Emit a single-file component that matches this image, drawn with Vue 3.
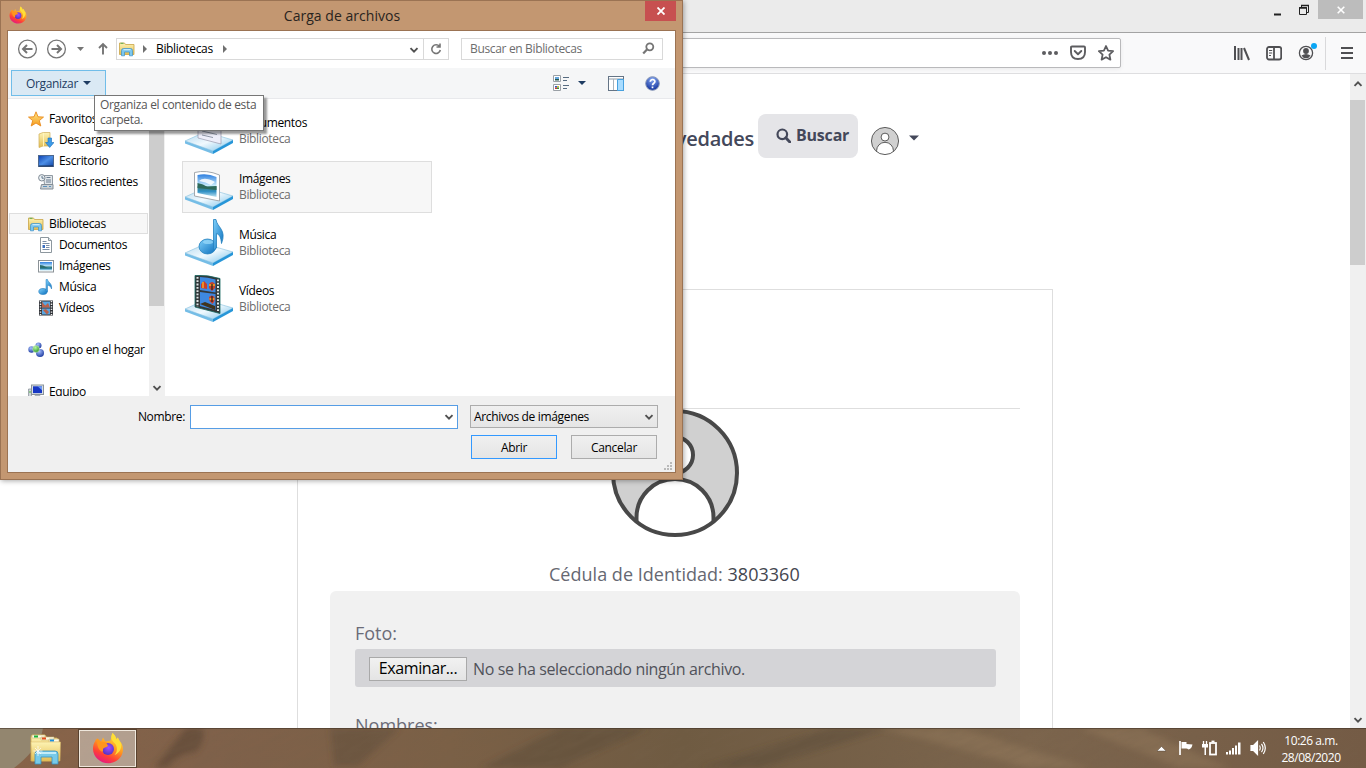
<script setup>
const tree = [
  { label: 'Favoritos', icon: 'star', level: 0 },
  { label: 'Descargas', icon: 'downloads', level: 1 },
  { label: 'Escritorio', icon: 'desktop', level: 1 },
  { label: 'Sitios recientes', icon: 'recent', level: 1 },
  { spacer: true },
  { label: 'Bibliotecas', icon: 'library', level: 0, selected: true },
  { label: 'Documentos', icon: 'document', level: 1 },
  { label: 'Imágenes', icon: 'picture', level: 1 },
  { label: 'Música', icon: 'music', level: 1 },
  { label: 'Vídeos', icon: 'video', level: 1 },
  { spacer: true },
  { label: 'Grupo en el hogar', icon: 'homegroup', level: 0 },
  { spacer: true },
  { label: 'Equipo', icon: 'computer', level: 0 }
]
const libraries = [
  { name: 'Documentos', icon: 'big-doc' },
  { name: 'Imágenes', icon: 'big-picture', hover: true },
  { name: 'Música', icon: 'big-music' },
  { name: 'Vídeos', icon: 'big-video' }
]
</script>

<template>
  <div class="screen">
    <svg class="defs" width="0" height="0" aria-hidden="true">
      <defs>
        <linearGradient id="gFolder" x1="0" y1="0" x2="0" y2="1"><stop offset="0" stop-color="#fdf3b4" /><stop offset="1" stop-color="#e3bd52" /></linearGradient>
        <linearGradient id="gBlue" x1="0" y1="0" x2="1" y2="1"><stop offset="0" stop-color="#0b3fb0" /><stop offset=".5" stop-color="#4d8fe6" /><stop offset="1" stop-color="#1246a6" /></linearGradient>
        <linearGradient id="gNote" x1="0" y1="0" x2="1" y2="1"><stop offset="0" stop-color="#7fd0fa" /><stop offset="1" stop-color="#0b6fbd" /></linearGradient>
        <linearGradient id="gPlate" x1="0" y1="0" x2="1" y2="1"><stop offset="0" stop-color="#b4d9ef" /><stop offset=".5" stop-color="#f0f9fe" /><stop offset="1" stop-color="#79c2ea" /></linearGradient>
        <linearGradient id="gSky" x1="0" y1="0" x2="0" y2="1"><stop offset="0" stop-color="#2d7fe0" /><stop offset=".5" stop-color="#c9ecfb" /><stop offset=".55" stop-color="#3d7f7a" /><stop offset=".75" stop-color="#2f8fc4" /><stop offset="1" stop-color="#bfe4f2" /></linearGradient>
        <linearGradient id="gStar" x1="0" y1="0" x2="0" y2="1"><stop offset="0" stop-color="#ffe98a" /><stop offset="1" stop-color="#f59a1b" /></linearGradient>
        <linearGradient id="gFox" x1=".8" y1="0" x2=".3" y2="1"><stop offset="0" stop-color="#fff04a" /><stop offset=".45" stop-color="#ff9a1f" /><stop offset=".75" stop-color="#ff4036" /><stop offset="1" stop-color="#e31587" /></linearGradient>
        <radialGradient id="gGlobe" cx=".55" cy=".4" r=".7"><stop offset="0" stop-color="#a44dff" /><stop offset="1" stop-color="#4630b8" /></radialGradient>
        <radialGradient id="gHelp" cx=".5" cy=".2" r=".8"><stop offset="0" stop-color="#87a9f2" /><stop offset="1" stop-color="#10309c" /></radialGradient>
        <radialGradient id="gBall" cx=".4" cy=".3" r=".8"><stop offset="0" stop-color="#a5c0ff" /><stop offset="1" stop-color="#122f96" /></radialGradient>
        <radialGradient id="gGreen" cx=".4" cy=".3" r=".8"><stop offset="0" stop-color="#b8f7a0" /><stop offset="1" stop-color="#168a1a" /></radialGradient>
      </defs>

      <symbol id="firefox" viewBox="0 0 32 32">
        <path d="M5.500 6.500 9 9.800l2-4.300 2.400 4.100c2-.9 3.600-1 5-.8L20.500 1c1.900 1.700 3.300 3.700 4 6.200l1.400-1.700c.5 2.200 2.300 3.700 3.800 6.200 1.600 3 1.800 7.300.3 10.800C27.700 27.800 22.500 31.200 16.500 31.200 8.200 31.200 1 25 1 16.700c0-3.200.9-5.500 2.200-7.500.3-1.200 1-2.100 2.300-2.700z" fill="url(#gFox)" />
        <circle cx="16" cy="17" r="6" fill="url(#gGlobe)" />
        <path d="M5.500 6.500 9 10l5 .5 2 3.200c-1 1.700-3.500 1.500-4.400 2.500-1.300 1.300.2 3-1.300 3.600C7.500 19 4 14 5.500 6.500z" fill="#ff951d" />
        <path d="M20.500 1c-2.500 4.500-.8 7.500 2.200 10.200 3 3 3 9-.2 11.800 5-2 7.500-6.500 6.500-11.500-1.500-2.500-2.600-4-3.100-6l-1.400 1.700C23.800 4.700 22.400 2.700 20.500 1z" fill="#ffdf38" />
      </symbol>

      <symbol id="library" viewBox="0 0 16 16">
        <path d="M.5 2h5l1 1.500H15v10H.5z" fill="url(#gFolder)" stroke="#c9a548" stroke-width=".8" />
        <path d="M1.500 2.300h3" stroke="#59a94b" />
        <path d="M2.500 14.800V9.500q0-2 2-2h7q2 0 2 2v5.300h-3V11h-5v3.800z" fill="#7cc7ee" stroke="#3c91c9" stroke-width=".7" />
        <path d="M4.500 8.700h7" stroke="#d9f3ff" />
      </symbol>
      <symbol id="star" viewBox="0 0 16 16"><path d="M8 .8l2 5 5.500.3-4.200 3.500 1.500 5.400L8 12l-4.800 3 1.500-5.400L.5 6.100 6 5.800z" fill="url(#gStar)" stroke="#e98a1c" stroke-width=".9" /></symbol>
      <symbol id="downloads" viewBox="0 0 16 16">
        <path d="M1 2l4-1.500h7V14H5l-4 1.500z" fill="url(#gFolder)" stroke="#cfae57" stroke-width=".7" /><path d="M5.500.8v14" stroke="#fff4bd" />
        <path d="M10 6h3.500v4.500H16L11.700 15.500 7.500 10.500H10z" fill="#3d9be8" stroke="#1a6ebc" stroke-width=".6" />
      </symbol>
      <symbol id="desktop" viewBox="0 0 16 16"><rect x=".5" y="2.500" width="15" height="11" fill="url(#gBlue)" stroke="#4c678e" /><path d="M1 13h14" stroke="#193156" /></symbol>
      <symbol id="recent" viewBox="0 0 16 16">
        <path d="M5.500 1.500h9v9h-8z" fill="#e1e6ea" stroke="#909aa3" /><path d="M8.500 3.500h4M8 6h5M8 8h5" stroke="#6a7d90" />
        <path d="M3.500 10.500h11.500v4.500H2.500z" fill="#cbd2d7" stroke="#848e97" /><path d="M5 12.500h4M11 12.500h2" stroke="#5b92bd" />
        <circle cx="3.800" cy="3.800" r="3.200" fill="#edf2f5" stroke="#7f8a94" /><path d="M4 2v2.200h1.800" stroke="#3c5972" fill="none" stroke-width=".8" />
      </symbol>
      <symbol id="document" viewBox="0 0 16 16">
        <path d="M2.500.5h8l3 3v12h-11z" fill="#fff" stroke="#8d979e" /><path d="M10.500.5v3h3" fill="#dbe3e8" stroke="#8d979e" />
        <path d="M4.500 4.500h4M4.500 6.500h7M8 8.500h3.500M8 10.500h3.500M4.500 12.500h7" stroke="#7a8ea8" /><path d="M4.500 8h2.500v3H4.500z" fill="#3a6fc1" />
      </symbol>
      <symbol id="picture" viewBox="0 0 16 16"><rect x=".5" y="2.500" width="15" height="11.500" fill="#fff" stroke="#8b9297" /><path d="M2 4h12v8.500H2z" fill="url(#gSky)" /><path d="M2 7q3 0 6 2t6 0v1.500H2z" fill="#2c6e6e" /></symbol>
      <symbol id="music" viewBox="0 0 16 16"><ellipse cx="5" cy="12.500" rx="4.200" ry="3" fill="url(#gNote)" stroke="#1d78bd" stroke-width=".6" /><path d="M8 12.500V.5h1.500c.5 3 5 3.500 4 9.500-.5-2-1.500-3.300-4-4v6.500z" fill="url(#gNote)" stroke="#1d78bd" stroke-width=".5" /></symbol>
      <symbol id="video" viewBox="0 0 16 16">
        <rect x="1" y=".5" width="14" height="15" fill="#303338" /><path d="M2.500 1v14M13.500 1v14" stroke="#eee" stroke-width="1.500" stroke-dasharray="1.300 1.300" />
        <path d="M4 1.500h8v6H4zM4 8.500h8v6H4z" fill="#5aa5df" /><path d="M4 1.500l2 3 1.500 1L10 3l2 4.500H4zM5 10l3-1 3 3-2 2.500z" fill="#b9614b" />
      </symbol>
      <symbol id="homegroup" viewBox="0 0 16 16"><circle cx="3.500" cy="7.500" r="3.200" fill="url(#gBall)" /><circle cx="10.500" cy="3.500" r="3" fill="url(#gBall)" /><circle cx="12" cy="11" r="4" fill="url(#gBall)" /><circle cx="8" cy="7" r="3.400" fill="url(#gGreen)" stroke="#e6f7e2" stroke-width=".5" /></symbol>
      <symbol id="computer" viewBox="0 0 16 16"><path d="M.5 5h3v9h-3z" fill="#cfd5da" stroke="#828b93" stroke-width=".7" /><path d="M1 8h2" stroke="#4ab33c" /><rect x="3.500" y="1" width="12" height="9.500" fill="#d9dfe3" stroke="#8a939a" /><rect x="5" y="2.300" width="9" height="6.800" fill="#1737c4" /><path d="M9.500 2.300H14v4z" fill="#6f9bf2" /><path d="M7 11h5l1.500 3h-8z" fill="#aab2b8" /></symbol>

      <symbol id="plate" viewBox="0 0 48 48">
        <path d="M0 35l20-9 28 8-20 11z" fill="url(#gPlate)" stroke="#85bfdd" stroke-width=".6" />
        <path d="M0 35v2.500L28 48v-3z" fill="#75bde6" /><path d="M28 45v3l20-11v-3z" fill="#2796d8" />
      </symbol>
      <symbol id="big-doc" viewBox="0 0 48 48"><use href="#plate" /><path d="M13 4l23 3v31l-23-6z" fill="#eeeefa" stroke="#9a9aae" stroke-width=".7" /><path d="M17 21l15 3M17 25l15 3.500M17 29l11 2.500" stroke="#8e96a6" /></symbol>
      <symbol id="big-picture" viewBox="0 0 48 48">
        <use href="#plate" /><path d="M9.500 10.500q12-3 25 2.500v26l-25-5z" fill="#fff" stroke="#a3a8ad" /><path d="M12.500 13q10-2 19 2v20l-19-4z" fill="url(#gSky)" />
        <path d="M12.500 21q6 1 10 4l9-1v4l-19-2z" fill="#2e6a5a" /><path d="M14 19q5-5 16 1l-4 3q-5-3-12-4z" fill="#fff" opacity=".85" />
      </symbol>
      <symbol id="big-music" viewBox="0 0 48 48">
        <use href="#plate" /><ellipse cx="22.500" cy="28.500" rx="8.500" ry="7.500" fill="url(#gNote)" stroke="#2380be" stroke-width=".8" />
        <path d="M28.500 32V1.500h2.500c1 8 11 10 5.500 24-.5-6-2-9-5-10V30z" fill="url(#gNote)" stroke="#2380be" stroke-width=".8" /><ellipse cx="23" cy="24" rx="5" ry="2" fill="#9bdcfb" opacity=".7" />
      </symbol>
      <symbol id="big-video" viewBox="0 0 48 48">
        <use href="#plate" /><path d="M10 1.500q12-1 25 3v35L10 33z" fill="#33383a" stroke="#15675f" stroke-width=".8" />
        <path d="M12.500 3v30M33 5.500v33" stroke="#dfe6e6" stroke-width="2" stroke-dasharray="1.800 1.500" />
        <path d="M15 3q8 0 15.500 2.500v13L15 16zM15 18l15.500 2v16L15 32z" fill="#3e88e0" />
        <path d="M16 14V10l3-3 3 3v5zM24 10q3-4 6 0v4l-3 3-3-3zM24 23q3-3 5.500 0v4l-2 3-3-3z" fill="#c93f2a" /><path d="M24 11h6M18 8v6M24.500 25h5" stroke="#f6ab27" stroke-width="1.500" /><path d="M27 10v6M27 22v6" stroke="#2c2a24" stroke-width="1.300" /><path d="M15 30l5-2 10 4v4z" fill="#40341f" />
      </symbol>

      <symbol id="person" viewBox="0 0 128 128">
        <circle cx="64" cy="64" r="62" fill="#d0d0d0" />
        <path d="M25.500 112V108.500a38.500 38.500 0 0 1 77 0V112Q88 126 64 126T25.500 112z" fill="#fff" />
        <path d="M25.500 112V108.500a38.500 38.500 0 0 1 77 0V112" class="ring" />
        <circle cx="64" cy="46" r="18" fill="#fff" class="ring2" /><circle cx="64" cy="64" r="62" class="ring" />
      </symbol>
      <symbol id="chev" viewBox="0 0 10 10"><path d="M1.500 3.200 5 6.700 8.500 3.200" fill="none" stroke="#505050" stroke-width="1.900" /></symbol>
    </svg>

    <section class="browser">
      <header class="caption">
        <svg class="min" width="10" height="12" viewBox="0 0 10 12"><path d="M1 9.500h7" stroke="#222" stroke-width="2" /></svg>
        <svg class="max" width="12" height="12" viewBox="0 0 12 12"><path d="M1.500 3.500h7v7h-7zM3.500 3V1.500h7v7H9" fill="none" stroke="#222" /><path d="M1 4h8M3 1.500h8" stroke="#222" stroke-width="1.600" /></svg>
        <div class="close-grey"><svg width="8" height="8" viewBox="0 0 8 8"><path d="M.7.7l6.600 6.600M7.300.7.7 7.300" stroke="#fff" stroke-width="1.600" /></svg></div>
      </header>
      <div class="toolbar">
        <div class="urlbar">
          <svg width="16" height="16" viewBox="0 0 16 16" fill="#5d5d60"><circle cx="2" cy="8" r="2" /><circle cx="8" cy="8" r="2" /><circle cx="14" cy="8" r="2" /></svg>
          <svg width="16" height="16" viewBox="0 0 16 16" fill="none" stroke="#5d5d60" stroke-width="1.900" stroke-linecap="round" stroke-linejoin="round"><path d="M2 1.500h12q1 0 1 1V7q0 7-7 7T1 7V2.500q0-1 1-1z" /><path d="M4.700 6 8 9.200 11.300 6" /></svg>
          <svg width="16" height="16" viewBox="0 0 16 16" fill="none" stroke="#5d5d60" stroke-width="1.800" stroke-linejoin="round"><path d="M8 1l2.100 4.600 5 .6-3.700 3.400 1 5L8 12.200l-4.400 2.400 1-5L.9 6.200l5-.6z" /></svg>
        </div>
        <div class="tools">
          <svg width="16" height="16" viewBox="0 0 16 16" stroke="#4f4f52" stroke-width="2"><path d="M1 1v14M4.500 3v12M7.500 3v12" /><path d="M10 3l5 12" /></svg>
          <svg width="16" height="16" viewBox="0 0 16 16" fill="none" stroke="#4f4f52" stroke-width="1.800"><rect x="1" y="2" width="14.200" height="12.500" rx="2" /><path d="M8 2v12" /><path d="M3 5.500h3.200M3 8h3.200M3 10.500h2" stroke-width="1" /></svg>
          <svg width="20" height="20" viewBox="0 0 20 20"><circle cx="9" cy="11" r="6.600" fill="none" stroke="#4f4f52" stroke-width="1.300" /><circle cx="9" cy="9" r="2.900" fill="#4f4f52" /><path d="M4.500 13.500Q9 10.500 13.500 13.500 12 16.300 9 16.300T4.500 13.500z" fill="#4f4f52" /><circle cx="17" cy="4" r="3" fill="#0aa6f5" /></svg>
          <i class="sep"></i>
          <svg width="12" height="14" viewBox="0 0 12 14"><path d="M0 2h12M0 7h12M0 12h12" stroke="#4f4f52" stroke-width="2" /></svg>
        </div>
      </div>
      <div class="viewport">
        <main class="page">
          <nav class="site-nav">
            <span class="nav-link">Novedades</span>
            <button class="search-btn"><svg width="15" height="15" viewBox="0 0 15 15" fill="none" stroke="#44485a"><circle cx="6.300" cy="6.300" r="4.800" stroke-width="2.200" /><path d="M9.800 9.800l4 4.200" stroke-width="2.800" stroke-linecap="round" /></svg><span>Buscar</span></button>
            <svg class="mini" width="28" height="28"><use href="#person" /></svg>
            <svg class="caret" width="10" height="6" viewBox="0 0 10 6"><path d="M0 .5h10L5 5.500z" fill="#44485a" /></svg>
          </nav>
          <section class="card">
            <div class="rule"></div>
            <svg class="big-avatar" width="128" height="128"><use href="#person" /></svg>
            <p class="ci">Cédula de Identidad: <b>3803360</b></p>
            <div class="form">
              <label>Foto:</label>
              <div class="file"><button>Examinar...</button><span>No se ha seleccionado ningún archivo.</span></div>
              <label class="second">Nombres:</label>
            </div>
          </section>
        </main>
        <aside class="vscroll">
          <svg class="up" width="10" height="10"><use href="#chev" /></svg>
          <div class="thumb"></div>
          <svg class="down" width="10" height="10"><use href="#chev" /></svg>
        </aside>
      </div>
    </section>

    <section class="dialog">
      <header class="d-title"><svg width="18" height="18"><use href="#firefox" /></svg><h1>Carga de archivos</h1>
        <div class="d-close"><svg width="8" height="8" viewBox="0 0 8 8"><path d="M.5.5l7 7M7.500.5l-7 7" stroke="#fff" stroke-width="1.800" /></svg></div></header>
      <div class="d-inner">
        <div class="d-nav">
          <svg class="arrows" width="104" height="22" viewBox="0 0 104 22" fill="none" stroke="#757575">
            <circle cx="11.500" cy="11" r="8.900" stroke-width="1.300" /><path d="M16.500 11h-9M11 7l-4 4 4 4" stroke-width="2" />
            <circle cx="40.500" cy="11" r="8.900" stroke-width="1.300" /><path d="M35.500 11h9M41 7l4 4-4 4" stroke-width="2" />
            <path d="M61 9h7l-3.500 4z" fill="#757575" stroke="none" /><path d="M87 16.500V6.500M83 10l4-4 4 4" stroke-width="1.900" />
          </svg>
          <div class="address">
            <svg width="16" height="16"><use href="#library" /></svg>
            <svg class="tri t1" width="4" height="8" viewBox="0 0 4 8"><path d="M0 0v8l4-4z" fill="#707070" /></svg>
            <span class="bib">Bibliotecas</span>
            <svg class="tri" width="4" height="8" viewBox="0 0 4 8"><path d="M0 0v8l4-4z" fill="#707070" /></svg>
            <svg class="achev" width="10" height="10"><use href="#chev" /></svg>
            <div class="refresh"><svg width="12" height="12" viewBox="0 0 12 12" fill="none" stroke="#757575" stroke-width="1.600"><path d="M9.500 3.500A4.300 4.300 0 1 0 10.300 7M6.500 4H10V.5" /></svg></div>
          </div>
          <div class="search"><span>Buscar en Bibliotecas</span><svg width="13" height="13" viewBox="0 0 13 13" fill="none" stroke="#757575"><circle cx="7.800" cy="4.800" r="3.500" stroke-width="1.800" /><path d="M5.200 7.300 1.200 11.500" stroke-width="2.200" /></svg></div>
        </div>
        <div class="d-tools">
          <div class="organize"><span>Organizar</span><svg width="8" height="4" viewBox="0 0 8 4"><path d="M0 0h8L4 4z" fill="#1e3c62" /></svg></div>
          <div class="view-tools">
            <svg width="16" height="16" viewBox="0 0 16 16"><path d="M.5.5h7v6h-7zM.5 9.500h7v6h-7z" fill="#fff" stroke="#9aa0a6" /><path d="M2 2h4v2H2z" fill="#65a6dd" /><path d="M2 4h4v1.500H2z" fill="#25584e" /><path d="M2 11h2v1.500H2z" fill="#2d58cf" /><path d="M4 11h2v1.500H4z" fill="#d1bd35" /><path d="M2 12.500h2V14H2z" fill="#cb362d" /><path d="M4 12.500h2V14H4z" fill="#328f43" /><path d="M10 2.500h6M10 5.500h4M10 10.500h6M10 13.500h4" stroke="#566b80" /></svg>
            <svg class="c" width="8" height="4" viewBox="0 0 8 4"><path d="M0 0h8L4 4z" fill="#1e3c62" /></svg>
            <svg class="pane" width="16" height="15" viewBox="0 0 16 15"><rect x=".5" y=".5" width="15" height="14" fill="#fff" stroke="#647486" /><path d="M1 3h14" stroke="#8e9aa6" /><path d="M5.500 3v11" stroke="#a9b3bc" /><path d="M9.500 3.500h6v11h-6z" fill="#a8dcff" stroke="#46a1e0" /></svg>
            <svg class="help" width="15" height="15" viewBox="0 0 15 15"><circle cx="7.500" cy="7.500" r="6.800" fill="url(#gHelp)" stroke="#8695b5" /><path d="M5.300 5.800c0-3.200 4.700-2.800 4.600-.2C9.900 7.300 7.500 7.200 7.500 9.300M7.500 10.500v1.700" stroke="#fff" stroke-width="1.700" fill="none" /></svg>
          </div>
        </div>
        <div class="d-body">
          <div class="tree">
            <div v-for="(n, i) in tree" :key="i" class="node" :class="{ child: n.level === 1, sel: n.selected }">
              <template v-if="!n.spacer"><svg width="16" height="16"><use :href="'#' + n.icon" /></svg><span>{{ n.label }}</span></template>
            </div>
          </div>
          <div class="tree-scroll"><div class="tthumb"></div><svg width="10" height="10"><use href="#chev" /></svg></div>
          <div class="libs">
            <div v-for="l in libraries" :key="l.name" class="lib" :class="{ hover: l.hover }">
              <svg width="48" height="48"><use :href="'#' + l.icon" /></svg>
              <div><div class="lname">{{ l.name }}</div><div class="lsub">Biblioteca</div></div>
            </div>
          </div>
        </div>
        <div class="d-foot">
          <div class="frow">
            <label>Nombre:</label>
            <div class="name-in"><svg width="10" height="10"><use href="#chev" /></svg></div>
            <div class="filter"><span>Archivos de imágenes</span><svg width="10" height="10"><use href="#chev" /></svg></div>
          </div>
          <div class="brow"><button class="primary">Abrir</button><button>Cancelar</button></div>
          <svg class="grip" width="9" height="9" viewBox="0 0 9 9" fill="#b9b9b9"><path d="M6 0h2v2H6zM3 3h2v2H3zM6 3h2v2H6zM0 6h2v2H0zM3 6h2v2H3zM6 6h2v2H6z" /></svg>
        </div>
      </div>
      <div class="tip">Organiza el contenido de esta<br />carpeta.</div>
    </section>

    <footer class="taskbar">
      <svg class="sand" width="1366" height="40" viewBox="0 0 1366 40" preserveAspectRatio="none">
        <defs>
          <linearGradient id="gSand" x1="0" x2="1"><stop offset="0" stop-color="#8a6448" /><stop offset=".15" stop-color="#80614a" /><stop offset=".33" stop-color="#7b6046" /><stop offset=".5" stop-color="#6f5b42" /><stop offset=".75" stop-color="#7c654d" /><stop offset="1" stop-color="#745b45" /></linearGradient>
          <filter id="grain" x="0" y="0" width="100%" height="100%"><feTurbulence type="fractalNoise" baseFrequency=".035 .16" numOctaves="4" seed="8" /><feColorMatrix values="0 0 0 0 .18  0 0 0 0 .12  0 0 0 0 .07  1.100 0 0 0 -.35" /></filter>
          <filter id="soft"><feGaussianBlur stdDeviation="3" /></filter>
        </defs>
        <rect width="1366" height="40" fill="url(#gSand)" />
        <g filter="url(#soft)"><path d="M203 0h-17l-32 40h14q8-14 28-16 10-12 7-24z" fill="#53402d" opacity=".55" /><path d="M330 0h70l-42 38h-24zM560 0h90L560 40h-80zM700 40l130-40h60L760 40z" fill="#4f4230" opacity=".35" /><path d="M880 0l150 40h60L960 0zM1140 0l90 40h-50L1080 0z" fill="#9a8060" opacity=".4" /></g>
        <g transform="rotate(-24 683 20)"><rect y="-320" width="1366" height="680" filter="url(#grain)" opacity=".4" /></g>
        <path d="M0 0h43q-3 20-29 40H0z" fill="#93866f" />
        <path d="M0 .5h1366" stroke="#403226" opacity=".55" />
      </svg>
      <div class="task-explorer">
        <svg width="32" height="32" viewBox="0 0 32 32"><path d="M2 2h13l2 3h10l2 3v20H1V4z" fill="url(#gFolder)" stroke="#cda84f" stroke-width=".8" /><path d="M2 2h13v3H2zM11 4h13v3H11zM19 6h10v3H19z" fill="#fffbe6" stroke="#c9b675" stroke-width=".6" /><path d="M4 3.500h4" stroke="#1bb338" stroke-width="2" /><path d="M12 5.500h4" stroke="#e34d1e" stroke-width="2" /><path d="M20 7.500h4" stroke="#198fe0" stroke-width="2" /><path d="M1 9h29.500L30 28H2z" fill="url(#gFolder)" stroke="#d8b760" stroke-width=".5" /><path d="M5 31V21q0-3 3-3h17q3 0 3 3v10h-6v-7H11v7z" fill="#78cae8" stroke="#3793bf" stroke-width=".8" /><path d="M7 20h19" stroke="#dcf8ff" stroke-width="1.500" /><path d="M8 13v10M3.500 18h9M5 15l6 6M11 15l-6 6" stroke="#fff" stroke-width=".7" /></svg>
      </div>
      <div class="task-firefox"><svg width="32" height="32"><use href="#firefox" /></svg></div>
      <div class="tray">
        <svg width="9" height="16" viewBox="0 0 9 16"><path d="M0 11 4.500 6.500 9 11z" fill="#fff" stroke="#453a2f" stroke-width=".4" /></svg>
        <svg width="16" height="16" viewBox="0 0 16 16"><path d="M2 1v14" stroke="#fff" stroke-width="1.700" /><path d="M3.500 2h5v2l6 .5q-1 4.500-4 5-1.500-1.500-3-1h-4z" fill="#fff" /></svg>
        <svg width="16" height="16" viewBox="0 0 16 16" fill="none" stroke="#fff"><path d="M1.500 1v3M4.500 1v3" stroke-width="1.300" /><path d="M0 4h6v3.500H4V15H2.500V7.500H0z" fill="#fff" stroke="none" /><rect x="8" y="3" width="6" height="11.500" stroke-width="1.800" /><path d="M9.500 1.500h3" stroke-width="1.800" /></svg>
        <svg width="16" height="16" viewBox="0 0 16 16" fill="#fff"><path d="M0 12h2v2.500H0zM3 10.500h2v4H3zM6 8h2v6.500H6zM9 5.500h2v9H9zM12 2.500h2.500v12H12z" /></svg>
        <svg width="16" height="16" viewBox="0 0 16 16" fill="none" stroke="#fff" stroke-width="1.200"><path d="M1 5.500h2.500l4-4v13l-4-4H1z" fill="#fff" /><path d="M9.500 5.500q1.500 2.500 0 5M11.500 3.800q3 4.200 0 8.400M13.300 2q4 6 0 12" /></svg>
        <div class="clock">10:26 a.m.<br /><span>28/08/2020</span></div>
      </div>
    </footer>
  </div>
</template>

<style>
html, body { overflow: hidden; }
</style>

<style scoped>
* { box-sizing: border-box; margin: 0; }
svg { display: block; flex: none; }
.defs { position: absolute; }
.screen { position: relative; width: 1366px; height: 768px; overflow: hidden; display: flex; flex-direction: column; font-family: "Open Sans", "Noto Sans", sans-serif; font-size: 12px; color: #000; background: #fff; }
button { font-family: inherit; padding: 0; }

.browser { height: 728px; display: flex; flex-direction: column; overflow: hidden; }
.caption { height: 33px; background: #ebebeb; border-bottom: 1px solid #a3a3a3; display: flex; justify-content: flex-end; padding-right: 3px; flex: none; }
.min { margin: 5px 15px 0 0; }
.max { margin: 4px 8px 0 0; }
.close-grey { width: 45px; height: 19px; background: #bcbcbc; display: grid; place-items: center; }
.toolbar { height: 41px; flex: none; background: #f9f9fa; border-bottom: 1px solid #dedee0; display: flex; align-items: center; }
.urlbar { width: 1121px; height: 30px; margin-top: -1px; border: 1px solid #b9b9bb; border-radius: 2px; background: #fff; display: flex; align-items: center; justify-content: flex-end; gap: 12px; padding-right: 6px; box-shadow: 0 1px 4px #0001; }
.tools { display: flex; align-items: center; padding-left: 113px; }
.tools svg:nth-child(2) { margin-left: 16px; }
.tools svg:nth-child(3) { margin: -3px 0 0 15px; }
.sep { width: 1px; height: 33px; background: #d9d9db; margin: 0 15px 0 8px; }
.viewport { flex: 1; display: flex; min-height: 0; }
.page { width: 1350px; overflow: hidden; display: flex; flex-direction: column; }
.site-nav { height: 215px; flex: none; display: flex; align-items: flex-start; justify-content: flex-end; padding: 40px 431px 0 0; color: #44485a; font-weight: 600; }
.nav-link { font-size: 20px; line-height: 26px; margin: 12px 4px 0 0; letter-spacing: -.25px; }
.search-btn { width: 100px; height: 44px; border: 0; border-radius: 8px; background: #e5e5e8; color: #44485a; font-weight: 700; font-size: 16px; display: flex; align-items: center; padding: 0 0 2px 18px; gap: 5px; letter-spacing: -.2px; }
.mini { margin: 13px 10px 0 13px; }
.caret { margin-top: 21px; }
.card { width: 756px; height: 600px; flex: none; margin-left: 297px; border: 1px solid #dedede; padding: 118px 32px 0; display: flex; flex-direction: column; }
.rule { height: 1px; background: #dedede; }
.big-avatar { margin: 0 auto; }
.ring { fill: none; stroke: #484848; stroke-width: 4; }
.ring2 { stroke: #484848; stroke-width: 4; }
.ci { font-size: 18px; line-height: 28px; margin: 23px 0 3px 219px; white-space: nowrap; color: #666872; letter-spacing: .02px; }
.ci b { font-weight: 400; color: #44464f; }
.form { flex: none; height: 200px; border-radius: 6px; background: #f1f1f1; padding: 28px 24px 0 25px; font-size: 18px; color: #6b6c78; }
.form label { display: block; line-height: 28px; height: 30px; }
.file { height: 38px; background: #d4d4d7; border-radius: 3px; display: flex; align-items: center; padding-left: 14px; gap: 6px; margin-bottom: 24px; font-size: 16px; color: #50525a; }
.file button { width: 98px; height: 24px; margin-top: 1px; border: 1px solid #a9a9a9; background: linear-gradient(#f1f1f1, #e4e4e4); font-size: 16px; color: #000; line-height: 21px; letter-spacing: -.4px; }
.file span { letter-spacing: -.36px; padding-top: 2px; }
.vscroll { width: 16px; background: #f0f0f0; display: flex; flex-direction: column; align-items: center; }
.up { transform: rotate(180deg); margin: 5px 0 11px; }
.thumb { width: 15px; height: 165px; background: #cdcdcd; align-self: flex-start; }
.down { margin: auto 0 3px; }

.dialog { position: absolute; left: 0; top: 0; width: 683px; height: 480px; background: #c39771; border: 1px solid #9b7353; box-shadow: 1px 1px 5px #0005; padding: 0 6px 6px 7px; }
.d-title { height: 29px; display: flex; align-items: flex-start; position: relative; justify-content: center; }
.d-title > svg { position: absolute; left: 1px; top: 5px; }
.d-title h1 { font-size: 14px; font-weight: 400; line-height: 29px; letter-spacing: .03px; color: #292420; }
.d-close { position: absolute; right: 0; top: 0; width: 31px; height: 20px; background: #c75050; display: grid; place-items: center; }
.d-inner { height: 443px; width: 669px; margin-left: -1px; background: #fff; border: 1px solid #9b7353; letter-spacing: -.34px; display: flex; flex-direction: column; }
.d-nav { height: 37px; flex: none; display: flex; align-items: center; padding: 0 0 2px 8px; }
.arrows { margin-right: -4px; }
.address { width: 333px; height: 22px; border: 1px solid #d9d9d9; display: flex; align-items: center; padding-left: 2px; }
.tri { margin-left: 10px; }
.t1 { margin: 0 9px 0 8px; }
.achev { margin: 2px 4px 0 auto; }
.refresh { width: 25px; height: 20px; border-left: 1px solid #d9d9d9; display: grid; place-items: center; }
.search { width: 202px; height: 22px; margin-left: 12px; border: 1px solid #d9d9d9; display: flex; align-items: center; justify-content: space-between; padding: 0 7px 0 8px; color: #6d6d6d; }
.d-tools { height: 31px; flex: none; background: #f5f6f7; border-bottom: 1px solid #e8e9ec; display: flex; align-items: flex-start; justify-content: space-between; padding: 2px 15px 0 3px; }
.organize { width: 95px; height: 26px; border: 1px solid #70bde9; background: #dae9f4; display: flex; align-items: center; justify-content: center; gap: 5px; color: #1e3c62; }
.view-tools { display: flex; align-items: center; height: 26px; }
.view-tools .c { margin-left: 9px; }
.pane { margin-left: 22px; }
.help { margin-left: 21px; }
.d-body { height: 297px; flex: none; display: flex; }
.tree { width: 141px; padding: 9px 0 0 1px; overflow: hidden; }
.node { height: 21px; width: 139px; display: flex; align-items: center; padding-left: 19px; gap: 5px; white-space: nowrap; }
.node.child { padding-left: 29px; }
.node.sel { background: #f7f7f7; border: 1px solid #dedede; padding-left: 18px; }
.tree-scroll { width: 16px; background: #f0f0f0; display: flex; flex-direction: column; align-items: center; justify-content: space-between; padding: 0 1px 3px 0; }
.tthumb { width: 15px; height: 207px; background: #cdcdcd; }
.libs { padding: 6px 0 0 17px; display: flex; flex-direction: column; gap: 4px; }
.lib { width: 250px; height: 52px; border: 1px solid transparent; display: flex; align-items: center; gap: 6px; padding-left: 2px; line-height: 16px; }
.lib > svg { margin-top: -3px; }
.lib.hover { border-color: #dedede; background: #f7f7f7; }
.lsub { color: #6d6d6d; }
.d-foot { flex: 1; background: #f0f0f0; position: relative; padding-top: 9px; }
.frow { display: flex; align-items: flex-start; }
.frow label { width: 182px; text-align: right; padding-right: 5px; line-height: 23px; }
.name-in { width: 268px; height: 24px; background: #fff; border: 1px solid #569de5; display: flex; align-items: center; justify-content: flex-end; padding-right: 3px; }
.filter { width: 188px; height: 23px; margin-left: 12px; border: 1px solid #acacac; background: linear-gradient(#f0f0f0, #e5e5e5); display: flex; align-items: center; justify-content: space-between; padding: 0 3px; }
.brow { display: flex; justify-content: flex-end; gap: 14px; padding: 6px 18px 0 0; }
.brow button { width: 86px; height: 24px; border: 1px solid #acacac; background: linear-gradient(#f0f0f0, #e5e5e5); font-size: 12px; letter-spacing: -.34px; color: #000; }
.brow .primary { border-color: #3399ff; }
.grip { position: absolute; right: 2px; bottom: 1px; }
.tip { position: absolute; left: 93px; top: 94px; width: 170px; height: 36px; border: 1px solid #767676; background: #fff; color: #575757; padding: 1px 5px; line-height: 15px; letter-spacing: -.34px; box-shadow: 3px 3px 2px #0006; white-space: nowrap; }

.taskbar { height: 40px; position: relative; display: flex; align-items: center; }
.sand { position: absolute; inset: 0; }
.task-explorer, .task-firefox, .tray { position: relative; }
.task-explorer { margin: 2px 17px 0 30px; }
.task-firefox { width: 59px; height: 39px; margin-left: -1px; border: 1px solid #59422f; outline: 1px solid #efe7dc; outline-offset: -2px; background: #ded6cc88; display: grid; place-items: center; }
.tray { margin-left: auto; display: flex; align-items: center; padding-right: 25px; gap: 8px; color: #fff; }
.tray svg:first-child { margin-right: 4px; }
.clock { width: 60px; margin-left: 7px; text-align: center; line-height: 17px; letter-spacing: -.45px; padding-top: 2px; white-space: nowrap; }
</style>
